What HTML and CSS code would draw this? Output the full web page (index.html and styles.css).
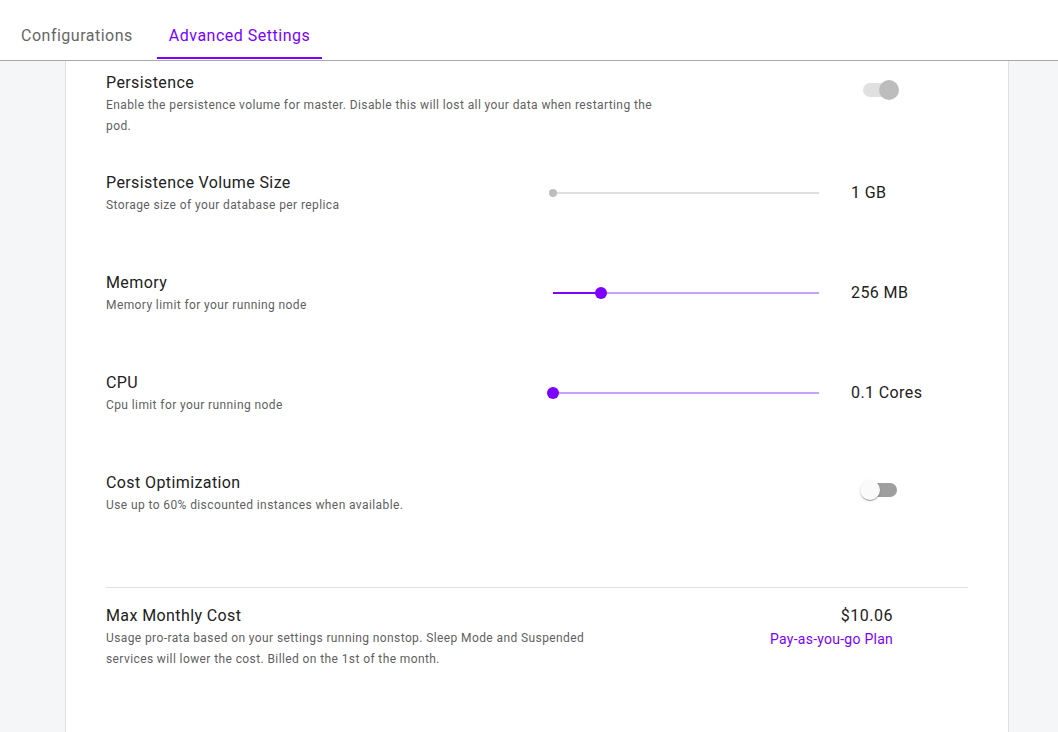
FILE: index.html
```html
<!DOCTYPE html>
<html>
<head>
<meta charset="utf-8">
<link rel="stylesheet" href="styles.css">
</head>
<body>
<header class="tabs">
  <div class="tab">Configurations</div>
  <div class="tab active">Advanced Settings</div>
</header>
<main class="main">
  <section class="card">
    <div class="row">
      <div class="text wide">
        <div class="title">Persistence</div>
        <div class="desc">Enable the persistence volume for master. Disable this will lost all your data when restarting the pod.</div>
      </div>
      <div class="control">
        <div class="switch on disabled"><span class="track"></span><span class="thumb"></span></div>
      </div>
    </div>
    <div class="row">
      <div class="text">
        <div class="title">Persistence Volume Size</div>
        <div class="desc">Storage size of your database per replica</div>
      </div>
      <div class="slider disabled"><span class="fill" style="width:0px"></span><span class="knob"></span><span class="rest"></span></div>
      <div class="value">1 GB</div>
    </div>
    <div class="row">
      <div class="text">
        <div class="title">Memory</div>
        <div class="desc">Memory limit for your running node</div>
      </div>
      <div class="slider"><span class="fill" style="width:48px"></span><span class="knob"></span><span class="rest"></span></div>
      <div class="value">256 MB</div>
    </div>
    <div class="row">
      <div class="text">
        <div class="title">CPU</div>
        <div class="desc">Cpu limit for your running node</div>
      </div>
      <div class="slider"><span class="fill" style="width:0px"></span><span class="knob"></span><span class="rest"></span></div>
      <div class="value">0.1 Cores</div>
    </div>
    <div class="row">
      <div class="text wide">
        <div class="title">Cost Optimization</div>
        <div class="desc">Use up to 60% discounted instances when available.</div>
      </div>
      <div class="control">
        <div class="switch off"><span class="track"></span><span class="thumb"></span></div>
      </div>
    </div>
    <div class="footer">
      <div class="text cost-text">
        <div class="title">Max Monthly Cost</div>
        <div class="desc">Usage pro-rata based on your settings running nonstop. Sleep Mode and Suspended services will lower the cost. Billed on the 1st of the month.</div>
      </div>
      <div class="price">
        <div class="amount">$10.06</div>
        <div class="plan">Pay-as-you-go Plan</div>
      </div>
    </div>
  </section>
</main>
</body>
</html>
```

FILE: styles.css
```css
* { box-sizing: border-box; }
html, body { margin: 0; padding: 0; }
body {
  background: #f5f6f8;
  font-family: Roboto, "Noto Sans", "Liberation Sans", sans-serif;
  color: #212121;
  height: 732px;
  overflow: hidden;
}
.tabs {
  height: 61px;
  background: #fff;
  border-bottom: 1px solid #a9a9a9;
  display: flex;
  align-items: stretch;
  padding-left: 9px;
  gap: 12px;
}
.tab {
  padding: 14px 12px 0;
  font-size: 16px;
  letter-spacing: 0.5px;
  color: #666;
  display: flex;
  align-items: center;
  border-bottom: 2px solid transparent;
  margin-bottom: 1px;
}
.tab.active {
  color: #7b00ff;
  border-bottom-color: #7b00ff;
}
.main {
  padding-left: 65px;
}
.card {
  width: 944px;
  min-height: 700px;
  background: #fff;
  border: 1px solid #e0e0e0;
  border-top: none;
  padding: 10px 40px 0 40px;
}
.row {
  height: 100px;
  display: grid;
  grid-template-columns: 447px 266px 1fr;
  align-items: start;
}
.text.wide {
  grid-column: 1 / 3;
  max-width: 560px;
}
.title {
  font-size: 16px;
  line-height: 24px;
  letter-spacing: 0.4px;
  color: #212121;
}
.desc {
  font-size: 12px;
  line-height: 21px;
  letter-spacing: 0.4px;
  color: #5f5f5f;
}
.control {
  grid-column: 3;
  padding-left: 44px;
  margin-top: 9px;
}
.switch {
  width: 34px;
  height: 20px;
  display: flex;
  align-items: center;
}
.switch .track {
  width: 34px;
  height: 14px;
  border-radius: 7px;
  background: #9e9e9e;
  flex: none;
}
.switch .thumb {
  width: 20px;
  height: 20px;
  border-radius: 50%;
  background: #fafafa;
  box-shadow: 0 2px 1px -1px rgba(0,0,0,0.2), 0 1px 1px 0 rgba(0,0,0,0.14), 0 1px 3px 0 rgba(0,0,0,0.12);
  margin-left: -37px;
  flex: none;
}
.switch.on .thumb { margin-left: -18px; }
.switch.disabled .track { background: #e0e0e0; }
.switch.disabled .thumb { background: #bdbdbd; box-shadow: none; }
.slider {
  grid-column: 2;
  margin-top: 16px;
  height: 12px;
  display: flex;
  align-items: center;
}
.slider .fill {
  height: 2px;
  background: #7b00ff;
  flex: none;
}
.slider .knob {
  width: 12px;
  height: 12px;
  border-radius: 50%;
  background: #7b00ff;
  margin: 0 -6px;
  flex: none;
  position: relative;
  z-index: 1;
}
.slider .rest {
  flex: 1;
  height: 2px;
  background: #c9a0fb;
}
.slider.disabled .knob {
  width: 8px;
  height: 8px;
  margin: 0 -4px;
  background: #bdbdbd;
}
.slider.disabled .rest { background: #e0e0e0; }
.value {
  grid-column: 3;
  margin-top: 10px;
  padding-left: 32px;
  font-size: 16px;
  line-height: 24px;
  letter-spacing: 0.4px;
  color: #212121;
}
.footer {
  margin-top: 16px;
  border-top: 1px solid #e0e0e0;
  padding: 16px 75px 0 0;
  display: flex;
  justify-content: space-between;
  align-items: flex-start;
}
.cost-text { max-width: 500px; }
.price {
  text-align: right;
}
.amount {
  font-size: 16px;
  line-height: 24px;
  letter-spacing: 0.5px;
  color: #212121;
}
.plan {
  font-size: 14px;
  line-height: 22px;
  letter-spacing: 0.25px;
  color: #7b00ff;
}
```
